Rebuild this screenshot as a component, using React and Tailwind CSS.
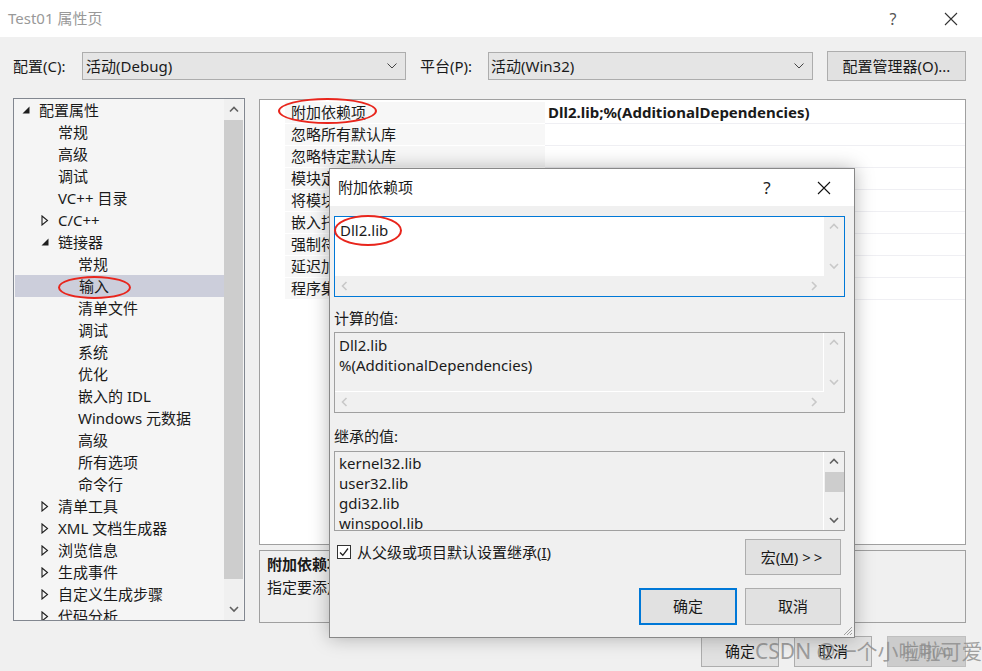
import React from 'react';

const treeItems = [
  { t: '配置属性', lv: 0, a: 'open' },
  { t: '常规', lv: 1 },
  { t: '高级', lv: 1 },
  { t: '调试', lv: 1 },
  { t: 'VC++ 目录', lv: 1 },
  { t: 'C/C++', lv: 1, a: 'closed' },
  { t: '链接器', lv: 1, a: 'open' },
  { t: '常规', lv: 2 },
  { t: '输入', lv: 2, sel: true },
  { t: '清单文件', lv: 2 },
  { t: '调试', lv: 2 },
  { t: '系统', lv: 2 },
  { t: '优化', lv: 2 },
  { t: '嵌入的 IDL', lv: 2 },
  { t: 'Windows 元数据', lv: 2 },
  { t: '高级', lv: 2 },
  { t: '所有选项', lv: 2 },
  { t: '命令行', lv: 2 },
  { t: '清单工具', lv: 1, a: 'closed' },
  { t: 'XML 文档生成器', lv: 1, a: 'closed' },
  { t: '浏览信息', lv: 1, a: 'closed' },
  { t: '生成事件', lv: 1, a: 'closed' },
  { t: '自定义生成步骤', lv: 1, a: 'closed' },
  { t: '代码分析', lv: 1, a: 'closed' },
];

const levelPad = ['pl-[8px]', 'pl-[27px]', 'pl-[47px]'];

const props = [
  '附加依赖项',
  '忽略所有默认库',
  '忽略特定默认库',
  '模块定义文件',
  '将模块添加到程序集',
  '嵌入托管资源文件',
  '强制符号引用',
  '延迟加载的 DLL',
  '程序集链接资源',
];

const Chevron = ({ dir = 'down', color = '#606060', w = 10 }) => {
  const d = {
    up: 'M1 6.5 L5 2.5 L9 6.5',
    down: 'M1 3 L5 7 L9 3',
    left: 'M6.5 1 L2.5 5 L6.5 9',
    right: 'M3 1 L7 5 L3 9',
  }[dir];
  return (
    <svg width={w} height={w} viewBox="0 0 10 10">
      <path d={d} fill="none" stroke={color} strokeWidth="1.6" />
    </svg>
  );
};

const XIcon = ({ size = 14, color = '#111' }) => (
  <svg width={size} height={size} viewBox="0 0 14 14">
    <path d="M1 1 L13 13 M13 1 L1 13" stroke={color} strokeWidth="1.1" />
  </svg>
);

const TreeArrow = ({ a }) => {
  if (a === 'open')
    return (
      <svg width="8" height="8" viewBox="0 0 8 8">
        <path d="M7.5 0.5 L7.5 7.5 L0.5 7.5 Z" fill="#1e1e1e" />
      </svg>
    );
  if (a === 'closed')
    return (
      <svg width="8" height="11" viewBox="0 0 8 11">
        <path d="M1 1 L6.5 5.5 L1 10 Z" fill="none" stroke="#1e1e1e" strokeWidth="1.1" />
      </svg>
    );
  return null;
};

const ComboChevron = () => (
  <svg width="10" height="6" viewBox="0 0 10 6">
    <path d="M0.5 0.5 L5 5 L9.5 0.5" fill="none" stroke="#444" strokeWidth="1" />
  </svg>
);

const VScroll = ({ color, thumb, className = '' }) => (
  <div className={`w-[20px] flex flex-col items-center bg-[#f0f0f0] ${className}`}>
    <div className="h-[20px] flex items-center justify-center">
      <Chevron dir="up" color={color} />
    </div>
    {thumb ? <div className="w-[19px] h-[20px] bg-[#cdcdcd]" /> : null}
    <div className="flex-1" />
    <div className="h-[20px] flex items-center justify-center">
      <Chevron dir="down" color={color} />
    </div>
  </div>
);

const HScroll = () => (
  <div className="h-[20px] flex items-center justify-between px-[5px] bg-[#f0f0f0]">
    <Chevron dir="left" color="#c8c8c8" />
    <Chevron dir="right" color="#c8c8c8" />
  </div>
);

const Ellipse = ({ className }) => (
  <div className={`absolute rounded-[50%] border-2 border-[#e8251c] pointer-events-none ${className}`} />
);

export default function App() {
  return (
    <div className="relative w-[982px] h-[671px] overflow-hidden bg-[#f0f0f0] text-[15px] text-[#1a1a1a] font-['Noto_Sans','Noto_Sans_CJK_SC',sans-serif]">
      {/* title bar */}
      <div className="h-[37px] bg-white flex items-center pl-[8px]">
        <span className="text-[#999999] text-[15px]">Test01 属性页</span>
        <span className="ml-auto text-[#555] text-[16px] w-[20px] text-center mr-[41px]">?</span>
        <div className="mr-[24px] flex items-center">
          <XIcon size={14} color="#333" />
        </div>
      </div>

      {/* config row */}
      <div className="flex items-center h-[30px] mt-[14px] pl-[13px]">
        <span className="w-[69px]">配置(C):</span>
        <div className="w-[324px] h-[28px] bg-[#e5e5e5] border border-[#adadad] flex items-center pl-[3px] pr-[8px]">
          <span>活动(Debug)</span>
          <span className="ml-auto">
            <ComboChevron />
          </span>
        </div>
        <span className="ml-[14px] w-[68px]">平台(P):</span>
        <div className="w-[325px] h-[28px] bg-[#e5e5e5] border border-[#adadad] flex items-center pl-[2px] pr-[8px]">
          <span>活动(Win32)</span>
          <span className="ml-auto">
            <ComboChevron />
          </span>
        </div>
        <div className="ml-[14px] w-[139px] h-[30px] bg-[#e1e1e1] border border-[#adadad] flex items-center justify-center">
          配置管理器(O)...
        </div>
      </div>

      {/* main area */}
      <div className="flex gap-[14px] pl-[13px] pr-[16px] mt-[17px] h-[525px]">
        {/* tree */}
        <div className="w-[232px] h-[523px] border border-[#828790] bg-[#f5f5f5] flex overflow-hidden">
          <div className="flex-1 overflow-hidden">
            {treeItems.map((it, i) => (
              <div
                key={i}
                className={`h-[22px] flex items-center whitespace-nowrap ${levelPad[it.lv]} ${it.sel ? 'bg-[#cccedb] ml-[1px]' : ''}`}
              >
                <span className="w-[17px] flex items-center">
                  <TreeArrow a={it.a} />
                </span>
                <span>{it.t}</span>
              </div>
            ))}
          </div>
          <div className="w-[19px] mr-[1px] bg-[#f0f0f0] flex flex-col">
            <div className="h-[21px] flex items-center justify-center">
              <Chevron dir="up" />
            </div>
            <div className="h-[459px] bg-[#cdcdcd]" />
            <div className="flex-1" />
            <div className="h-[22px] flex items-center justify-center">
              <Chevron dir="down" />
            </div>
          </div>
        </div>

        {/* right column */}
        <div className="flex-1 flex flex-col mt-[1px]">
          <div className="h-[446px] border border-[#a0a0a0] bg-white pt-[2px]">
            {props.map((p, i) => (
              <div key={i} className="flex h-[22px]">
                <div className="w-[25px] bg-white" />
                <div className="w-[260px] bg-[#f7f7f7] border-b border-white pl-[6px] flex items-center whitespace-nowrap">
                  {p}
                </div>
                <div className="flex-1 bg-white border-b border-[#efeff3] pl-[3px] flex items-center whitespace-nowrap">
                  {i === 0 ? <span className="font-bold">Dll2.lib;%(AdditionalDependencies)</span> : null}
                </div>
              </div>
            ))}
          </div>
          <div className="mt-[5px] h-[73px] border border-[#a0a0a0] bg-[#f0f0f0] pl-[7px] pt-[2px]">
            <div className="h-[22px] flex items-center font-bold">附加依赖项</div>
            <div className="h-[24px] flex items-center whitespace-nowrap">指定要添加到链接命令行的其他项。例如 kernel32.lib</div>
          </div>
        </div>
      </div>

      {/* bottom buttons */}
      <div className="flex justify-end mt-[13px] pr-[16px] gap-[15px]">
        <div className="w-[78px] h-[31px] bg-[#e1e1e1] border border-[#adadad] flex items-center justify-center">确定</div>
        <div className="w-[78px] h-[31px] bg-[#e1e1e1] border border-[#adadad] flex items-center justify-center">取消</div>
        <div className="w-[79px] h-[31px] bg-[#cccccc] border border-[#bfbfbf] flex items-center justify-center text-[#9a9a9a]">应用(A)</div>
      </div>

      {/* watermark */}
      <div className="absolute left-[755px] top-[636px] text-[21px] text-[#8a8a8a]/80 whitespace-nowrap pointer-events-none">
        CSDN @一个小啦啦可爱
      </div>

      {/* annotations behind dialog */}
      <Ellipse className="left-[278px] top-[98px] w-[99px] h-[26px]" />
      <Ellipse className="left-[58px] top-[276px] w-[73px] h-[23px]" />

      {/* dialog */}
      <div className="absolute left-[329px] top-[168px] w-[526px] h-[470px] border border-[#888888] bg-[#f0f0f0] shadow-[0_0_18px_rgba(0,0,0,0.28)] flex flex-col">
        <div className="h-[37px] bg-white flex items-center pl-[8px]">
          <span>附加依赖项</span>
          <span className="ml-auto text-[17px] text-[#222] w-[20px] text-center mr-[40px]">?</span>
          <div className="mr-[23px] flex items-center">
            <XIcon size={14} color="#111" />
          </div>
        </div>

        <div className="px-[4px] pr-[9px]">
          {/* edit box */}
          <div className="mt-[10px] h-[81px] border border-[#0078d7] flex flex-col">
            <div className="flex flex-1">
              <div className="flex-1 bg-white pl-[5px] pt-[3px] leading-[20px]">Dll2.lib</div>
              <VScroll color="#c8c8c8" />
            </div>
            <div className="flex">
              <div className="flex-1">
                <HScroll />
              </div>
              <div className="w-[20px] bg-[#f0f0f0]" />
            </div>
          </div>

          <div className="mt-[10px] h-[22px] flex items-center">计算的值:</div>
          <div className="mt-[3px] h-[81px] border border-[#a0a0a0] flex flex-col">
            <div className="flex flex-1">
              <div className="flex-1 bg-[#f0f0f0] border-b border-r border-white pl-[4px] pt-[2px] leading-[20px]">
                <div>Dll2.lib</div>
                <div>%(AdditionalDependencies)</div>
              </div>
              <VScroll color="#c8c8c8" />
            </div>
            <div className="flex">
              <div className="flex-1">
                <HScroll />
              </div>
              <div className="w-[20px] bg-[#f0f0f0]" />
            </div>
          </div>

          <div className="mt-[12px] h-[22px] flex items-center">继承的值:</div>
          <div className="mt-[4px] h-[80px] border border-[#a0a0a0] flex overflow-hidden">
            <div className="flex-1 bg-[#f0f0f0] border-r border-white pl-[4px] pt-[1px] leading-[20px] overflow-hidden">
              <div>kernel32.lib</div>
              <div>user32.lib</div>
              <div>gdi32.lib</div>
              <div>winspool.lib</div>
            </div>
            <VScroll color="#606060" thumb />
          </div>
        </div>

        <div className="flex mt-[8px] pl-[7px] pr-[13px]">
          <div className="flex items-center gap-[6px] h-[26px]">
            <div className="w-[14px] h-[14px] border border-[#333] bg-white flex items-center justify-center">
              <svg width="10" height="10" viewBox="0 0 10 10">
                <path d="M1 5.5 L3.8 8.3 L9 1.5" fill="none" stroke="#222" strokeWidth="1.3" />
              </svg>
            </div>
            <span>
              从父级或项目默认设置继承(<span className="underline">I</span>)
            </span>
          </div>
          <div className="ml-auto w-[96px] h-[36px] bg-[#e1e1e1] border border-[#adadad] flex items-center justify-center">
            宏(<span className="underline">M</span>)&nbsp;<span className="tracking-[3px]">&gt;&gt;</span>
          </div>
        </div>

        <div className="flex justify-end gap-[8px] pr-[13px] mt-[13px]">
          <div className="w-[98px] h-[37px] bg-[#e1e1e1] border-2 border-[#0078d7] flex items-center justify-center">确定</div>
          <div className="w-[96px] h-[37px] bg-[#e1e1e1] border border-[#adadad] flex items-center justify-center">取消</div>
        </div>

        <svg className="absolute right-[1px] bottom-[1px]" width="11" height="11" viewBox="0 0 11 11">
          <path d="M10 2 L2 10 M10 5 L5 10 M10 8 L8 10" stroke="#a0a0a0" strokeWidth="1" />
        </svg>
      </div>

      <Ellipse className="left-[334px] top-[215px] w-[68px] h-[31px]" />
    </div>
  );
}
